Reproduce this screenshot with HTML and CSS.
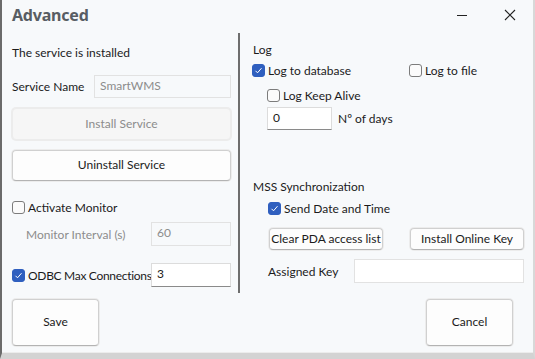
FILE: index.html
```html
<!DOCTYPE html>
<html lang="en">
  <head>
    <meta charset="UTF-8" />
    <title>Advanced</title>
    <link rel="stylesheet" href="styles.css">
  </head>
  <body>
    <div class="window">
      <div class="titlebar">
        <span class="title">Advanced</span>
        <span class="win-btn minimize"><svg width="12" height="12" viewBox="0 0 12 12"><path d="M1 6.5h10" stroke="#222" stroke-width="1"/></svg></span>
        <span class="win-btn close"><svg width="12" height="12" viewBox="0 0 12 12"><path d="M1 1l10 10M11 1L1 11" stroke="#222" stroke-width="1.1"/></svg></span>
      </div>

      <div class="content">
        <div class="col left">
          <div class="row status">The service is installed</div>

          <div class="row field name-row">
            <label class="lbl name-lbl">Service Name</label>
            <div class="input disabled wide">SmartWMS</div>
          </div>

          <button class="btn big disabled install">Install Service</button>
          <button class="btn big uninstall">Uninstall Service</button>

          <div class="row check monitor">
            <span class="box"></span>Activate Monitor
          </div>

          <div class="row field interval">
            <label class="lbl interval-lbl muted">Monitor Interval (s)</label>
            <div class="input disabled narrow">60</div>
          </div>

          <div class="row field odbc">
            <label class="lbl odbc-lbl"><span class="box on"><svg width="9" height="9" viewBox="0 0 9 9"><path d="M1.5 4.8l2 2 4-4.6" fill="none" stroke="#fff" stroke-width="1"/></svg></span>ODBC Max Connections</label>
            <div class="input active narrow">3</div>
          </div>
        </div>

        <div class="divider"></div>

        <div class="col right">
          <div class="row heading log">Log</div>

          <div class="row log-targets">
            <span class="check to-db"><span class="box on"><svg width="9" height="9" viewBox="0 0 9 9"><path d="M1.5 4.8l2 2 4-4.6" fill="none" stroke="#fff" stroke-width="1"/></svg></span>Log to database</span>
            <span class="check"><span class="box"></span>Log to file</span>
          </div>

          <div class="row check keep-alive">
            <span class="box"></span>Log Keep Alive
          </div>

          <div class="row field days">
            <div class="input active days-input">0</div>
            <span class="days-lbl">Nº of days</span>
          </div>

          <div class="row heading mss">MSS Synchronization</div>

          <div class="row check send-date">
            <span class="box on"><svg width="9" height="9" viewBox="0 0 9 9"><path d="M1.5 4.8l2 2 4-4.6" fill="none" stroke="#fff" stroke-width="1"/></svg></span>Send Date and Time
          </div>

          <div class="row actions">
            <button class="btn small">Clear PDA access list</button>
            <button class="btn small">Install Online Key</button>
          </div>

          <div class="row field assigned">
            <label class="lbl key-lbl">Assigned Key</label>
            <div class="input plain key-input"></div>
          </div>
        </div>
      </div>

      <div class="footer">
        <button class="btn footer-btn">Save</button>
        <button class="btn footer-btn">Cancel</button>
      </div>
    </div>
  </body>
</html>
```

FILE: styles.css
```css
:root {
  --bg: #f7f9fb;
  --text: #1b1b1b;
  --muted: #8c8c8c;
  --blue: #2f5fbf;
}
* {
  box-sizing: border-box;
}
body {
  margin: 0;
  background: var(--bg);
  font-family: Lato, "Noto Sans", sans-serif;
  font-size: 12px;
  color: var(--text);
}
.window {
  width: 535px;
  height: 359px;
  background: var(--bg);
  border-left: 2px solid #6b6b6b;
  border-right: 2px solid #d8d8d8;
  border-bottom: 6px solid #d3d3d3;
  box-shadow: inset 0 -1px 0 #ececec;
  display: flex;
  flex-direction: column;
  overflow: hidden;
  position: relative;
}
.window::after {
  content: "";
  position: absolute;
  left: 0;
  right: 0;
  bottom: -6px;
  height: 2px;
  background: #8f8f8f;
}
.titlebar {
  height: 33px;
  display: flex;
  align-items: center;
  padding-left: 10px;
}
.title {
  font-family: "Noto Sans", sans-serif;
  font-weight: 700;
  font-size: 16px;
  color: #585d63;
  flex: 1;
  margin-top: -3px;
  letter-spacing: -0.2px;
}
.win-btn {
  display: flex;
  width: 12px;
  height: 12px;
  margin-top: -3px;
}
.minimize {
  margin-right: 36px;
}
.close {
  margin-right: 17px;
}
.content {
  display: flex;
  height: 260px;
}
.col {
  display: flex;
  flex-direction: column;
}
.left {
  width: 236px;
  padding-left: 10px;
  padding-right: 7px;
}
.divider {
  width: 2px;
  background: #6e6e6e;
}
.right {
  flex: 1;
  padding-left: 12px;
  padding-right: 9px;
}
.row {
  display: flex;
  align-items: center;
  white-space: nowrap;
}
.status {
  height: 20px;
  margin-top: 9px;
}
.field .input {
  height: 24px;
}
.name-row {
  margin-top: 13px;
}
.name-row .input {
  height: 23px;
}
.lbl {
  display: flex;
  align-items: center;
  flex: none;
}
.name-lbl {
  width: 82px;
}
.input {
  border: 1px solid #e2e2e2;
  background: #fcfcfc;
  padding: 0 5px 3px;
  display: flex;
  align-items: center;
}
.input.disabled {
  background: var(--bg);
  color: var(--muted);
}
.input.active {
  background: #fff;
  border-color: #dcdcdc;
  border-bottom-color: #8a8a8a;
}
.input.plain {
  background: #fff;
}
.wide {
  flex: 1;
}
.narrow {
  width: 80px;
}
.btn {
  font: inherit;
  color: var(--text);
  background: #fdfdfd;
  border: 1px solid #d0d0d0;
  border-bottom-color: #b3b3b3;
  border-radius: 4px;
  box-shadow: 0 0 0 1px #ececec;
  padding: 0 0 2px;
  cursor: pointer;
}
.btn.disabled {
  color: var(--muted);
  background: #f6f6f6;
  border-color: #ececec;
}
.big {
  width: 219px;
  height: 32px;
}
.install {
  margin-top: 10px;
}
.uninstall {
  margin-top: 10px;
  height: 31px;
}
.check {
  display: flex;
  align-items: center;
}
.box {
  width: 13px;
  height: 13px;
  border: 1px solid #7c7c7c;
  border-radius: 3px;
  background: #fbfbfb;
  margin-right: 3px;
  display: inline-flex;
  align-items: center;
  justify-content: center;
  flex: none;
}
.box.on {
  background: var(--blue);
  border-color: var(--blue);
}
.monitor {
  height: 16px;
  margin-top: 18px;
}
.interval {
  margin-top: 7px;
}
.interval-lbl {
  width: 139px;
  padding-left: 14px;
}
.muted {
  color: var(--muted);
}
.odbc {
  margin-top: 17px;
}
.odbc-lbl {
  width: 139px;
  letter-spacing: -0.3px;
}
.heading {
  height: 16px;
}
.log {
  margin-top: 8px;
  padding-left: 1px;
}
.log-targets {
  height: 16px;
  margin-top: 5px;
}
.to-db {
  width: 157px;
}
.keep-alive {
  height: 16px;
  margin-top: 9px;
  padding-left: 15px;
}
.days {
  margin-top: 4px;
  padding-left: 15px;
}
.days .input {
  height: 23px;
}
.days-input {
  width: 65px;
}
.days-lbl {
  margin-left: 6px;
}
.mss {
  margin-top: 48px;
  padding-left: 1px;
}
.send-date {
  height: 16px;
  margin-top: 6px;
  padding-left: 16px;
}
.actions {
  margin-top: 12px;
  padding-left: 17px;
  justify-content: space-between;
}
.small {
  width: 114px;
  height: 22px;
}
.assigned {
  margin-top: 9px;
  padding-left: 16px;
}
.key-lbl {
  width: 86px;
}
.key-input {
  flex: 1;
}
.footer {
  flex: 1;
  display: flex;
  justify-content: space-between;
  align-items: flex-start;
  padding: 6px 20px 0 10px;
}
.footer-btn {
  width: 87px;
  height: 47px;
}
```
